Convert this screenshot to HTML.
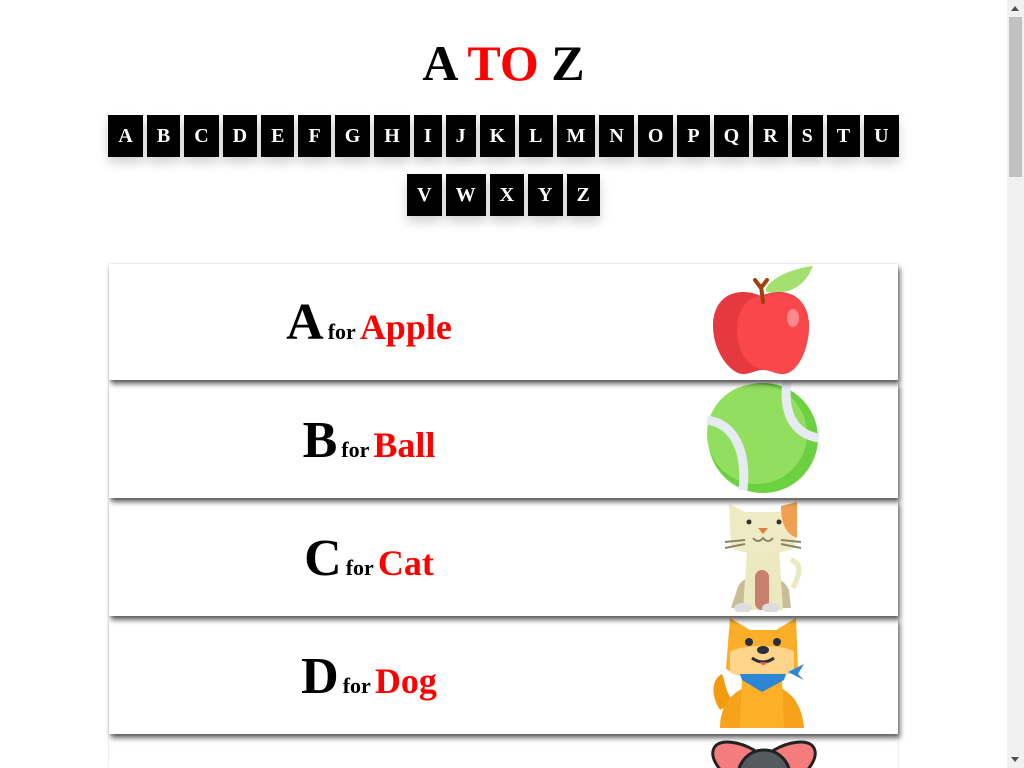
<!DOCTYPE html>
<html><head><meta charset="utf-8"><style>
*{margin:0;padding:0;box-sizing:border-box}
html,body{width:1024px;height:768px;overflow:hidden;background:#fff;font-family:"Liberation Serif",serif}
#wrap{position:relative;width:1024px;height:768px;overflow:hidden}
.sb{position:absolute;left:1007px;top:0;width:17px;height:768px;background:#f1f1f1;z-index:20}
.sb .th{position:absolute;left:2px;top:17px;width:13px;height:160px;background:#c1c1c1}
.sb .up{position:absolute;left:4px;top:6px;border:4px solid transparent;border-bottom:5px solid #505050;border-top:0}
.sb .dn{position:absolute;left:4px;top:757px;border:4px solid transparent;border-top:5px solid #505050;border-bottom:0}
h1{position:absolute;left:0;width:1007px;top:33px;text-align:center;font-size:50px;font-weight:bold;line-height:60px}
.row{position:absolute;left:0;width:1007px;display:flex;justify-content:center;gap:4px}
.row span{display:block;height:42px;line-height:42px;padding:0 10px;background:#000;color:#fff;font-weight:bold;font-size:20px;box-shadow:0 6px 10px rgba(0,0,0,.18)}
.card{position:absolute;left:109px;width:789px;height:116px;background:#fff;box-shadow:2px 4px 5px rgba(0,0,0,.6),0 0 2px rgba(0,0,0,.2)}
.t{position:absolute;left:0;width:520px;top:0;height:116px;text-align:center;line-height:118px;font-weight:bold;white-space:nowrap}
.t b{font-size:52px}.t i{font-style:normal;font-size:22px}.t em{font-style:normal;color:#f00;font-size:36px}
.card svg{position:absolute}
</style></head><body><div id="wrap">
<h1>A <span style="color:#f00">TO</span> Z</h1>
<div class="row" style="top:115px"><span>A</span><span>B</span><span>C</span><span>D</span><span>E</span><span>F</span><span>G</span><span>H</span><span>I</span><span>J</span><span>K</span><span>L</span><span>M</span><span>N</span><span>O</span><span>P</span><span>Q</span><span>R</span><span>S</span><span>T</span><span>U</span></div>
<div class="row" style="top:174px"><span>V</span><span>W</span><span>X</span><span>Y</span><span>Z</span></div>

<div class="card" style="top:264px;z-index:5"><div class="t"><b>A</b> <i>for</i> <em>Apple</em></div>
<svg style="left:600px;top:0" width="110" height="116" viewBox="0 0 110 116">
<path d="M58 28 C52 24 70 6 104 2 C98 18 84 32 58 28Z" fill="#a3e070"/>
<path d="M52 32 C30 22 4 30 4 62 C4 88 22 110 34 110 C42 110 46 106 54 106 C62 106 66 110 74 110 C88 110 100 86 100 62 C100 30 74 22 52 32Z" fill="#e5393f"/>
<path d="M56 32 C44 30 28 40 28 66 C28 92 42 104 56 106 C62 106 66 110 74 110 C88 110 100 86 100 62 C100 32 76 24 56 32Z" fill="#f9474c"/>
<ellipse cx="84" cy="54" rx="6" ry="9" fill="#ff8a8e"/>
<path d="M54 38 L52 22 M52 24 L46 16 M52 24 L58 16" stroke="#a0400f" stroke-width="4" fill="none" stroke-linecap="round"/>
</svg></div>

<div class="card" style="top:382px;z-index:4"><div class="t"><b>B</b> <i>for</i> <em>Ball</em></div>
<svg style="left:598px;top:0" width="112" height="112" viewBox="0 0 112 112">
<circle cx="56" cy="56" r="55" fill="#6dd040"/><circle cx="50" cy="52" r="50" fill="#92df60"/>
<path d="M0 38 C28 42 40 70 36 108" stroke="#e5ebf0" stroke-width="9" fill="none"/>
<path d="M80 0 C76 30 86 52 112 56" stroke="#e5ebf0" stroke-width="9" fill="none"/>
</svg></div>

<div class="card" style="top:500px;z-index:3"><div class="t"><b>C</b> <i>for</i> <em>Cat</em></div>
<svg style="left:612px;top:0" width="84" height="112" viewBox="0 0 84 112">
<path d="M70 60 C84 64 76 80 72 88" stroke="#ece8c0" stroke-width="5" fill="none"/>
<path d="M16 90 C20 70 60 70 68 90 L70 108 L10 108Z" fill="#c7bd98"/>
<path d="M26 50 L58 50 L62 110 L22 110Z" fill="#ece8c0"/>
<rect x="34" y="70" width="14" height="40" rx="7" fill="#c8806c"/>
<path d="M8 4 L24 12 L60 12 L76 4 L74 46 C70 56 14 56 10 46Z" fill="#eeeac4"/>
<path d="M60 6 L76 2 L76 38 C66 34 60 26 60 6Z" fill="#f0a050"/>
<circle cx="28" cy="22" r="2.5" fill="#333"/><circle cx="58" cy="22" r="2.5" fill="#333"/>
<path d="M37 28 L47 28 L42 34Z" fill="#e08040"/>
<path d="M32 38 Q37 44 42 38 Q47 44 52 38" stroke="#8a8466" stroke-width="2" fill="none"/>
<path d="M4 42 L24 40 M4 48 L24 44 M60 40 L80 42 M60 44 L80 48" stroke="#8a8466" stroke-width="2"/>
<ellipse cx="22" cy="108" rx="9" ry="5" fill="#ddd"/><ellipse cx="50" cy="108" rx="9" ry="5" fill="#ddd"/>
</svg></div>

<div class="card" style="top:618px;z-index:2"><div class="t"><b>D</b> <i>for</i> <em>Dog</em></div>
<svg style="left:601px;top:0" width="102" height="112" viewBox="0 0 102 112">
<path d="M12 56 C0 62 2 80 10 92 L24 84 C16 76 16 66 12 56Z" fill="#f29a10"/>
<path d="M10 110 C10 80 30 68 50 66 C80 66 92 86 94 110Z" fill="#f7a21b"/>
<path d="M32 60 L72 60 L74 110 L30 110Z" fill="#fbb028"/>
<path d="M20 0 L40 12 L66 12 L86 0 L88 50 C80 60 20 60 16 50Z" fill="#fbae2a"/>
<path d="M20 34 C30 26 76 26 84 34 L84 54 C70 62 30 62 20 54Z" fill="#fdd48a"/>
<circle cx="39" cy="24" r="4" fill="#2a2f3a"/><circle cx="67" cy="24" r="4" fill="#2a2f3a"/>
<ellipse cx="53" cy="32" rx="6" ry="4" fill="#2a2f3a"/>
<path d="M42 40 Q53 48 64 40" stroke="#2a2f3a" stroke-width="3" fill="none"/>
<path d="M50 44 Q53 50 57 44Z" fill="#e84a5f"/>
<path d="M30 56 L76 56 L74 62 L52 74 L32 62Z" fill="#2e86d2"/>
<path d="M78 54 L94 46 L88 56 L94 62Z" fill="#2e86d2"/>
</svg></div>

<div class="card" style="top:736px;height:32px;z-index:1;box-shadow:0 0 2px rgba(0,0,0,.2)">
<svg style="left:601px;top:0" width="110" height="32" viewBox="0 0 110 32">
<path d="M4 12 C10 2 30 6 44 14 L44 40 L16 40 C6 30 0 20 4 12Z" fill="#f47c7c" stroke="#222" stroke-width="3"/>
<path d="M104 12 C98 2 78 6 64 14 L64 40 L92 40 C102 30 108 20 104 12Z" fill="#f47c7c" stroke="#222" stroke-width="3"/>
<circle cx="54" cy="40" r="26" fill="#555a60" stroke="#222" stroke-width="3"/>
</svg></div>

<div class="sb"><div class="up"></div><div class="th"></div><div class="dn"></div></div>
</div></body></html>
